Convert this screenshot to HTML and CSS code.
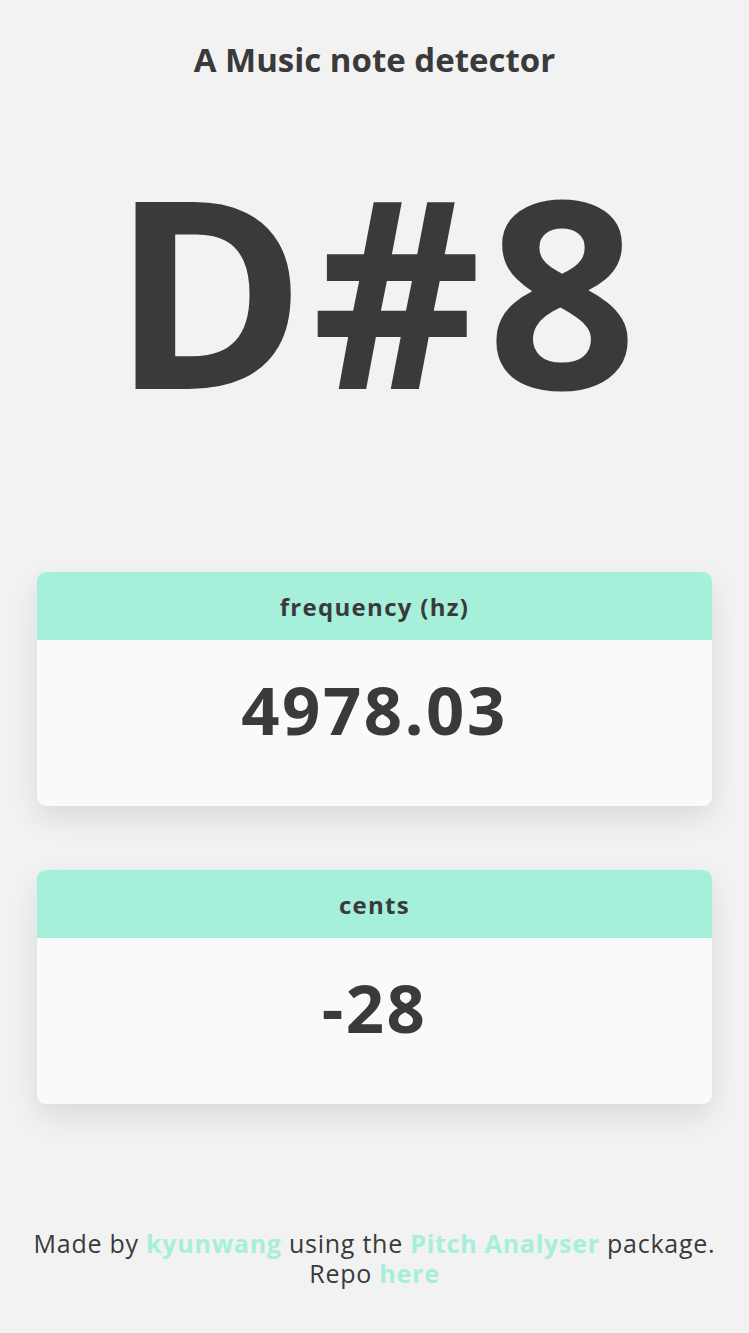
FILE: index.html
```html
<!DOCTYPE html>
<html>
<head>
<meta charset="utf-8">
<link rel="stylesheet" href="styles.css">
</head>
<body>
<main class="app">
  <h1 class="title">A Music note detector</h1>
  <div class="note">D#8</div>
  <section class="cards">
    <div class="card">
      <div class="card-head">frequency (hz)</div>
      <div class="card-body">4978.03</div>
    </div>
    <div class="card">
      <div class="card-head">cents</div>
      <div class="card-body">-28</div>
    </div>
  </section>
  <footer class="footer">
    Made by <a href="#">kyunwang</a> using the <a href="#">Pitch Analyser</a> package.<br>
    Repo <a href="#">here</a>
  </footer>
</main>
</body>
</html>
```
FILE: styles.css
```css
html, body {
  margin: 0;
  padding: 0;
  background: #f2f2f2;
}
body {
  font-family: "Open Sans", "DejaVu Sans", sans-serif;
  color: #3a3a3a;
}
.app {
  display: flex;
  flex-direction: column;
  align-items: center;
  min-height: 1333px;
}
.title {
  margin: 0;
  padding-top: 38px;
  font-size: 33px;
  font-weight: 700;
  line-height: 44px;
}
.note {
  margin-top: 75px;
  padding-left: 6px;
  font-size: 262px;
  font-weight: 700;
  line-height: 262px;
  letter-spacing: 6px;
}
.cards {
  margin-top: 153px;
  width: 90%;
  display: flex;
  flex-direction: column;
  gap: 64px;
}
.card {
  border-radius: 9px;
  overflow: hidden;
  background: #fafafa;
  box-shadow: 0 12px 30px rgba(0, 0, 0, 0.1);
}
.card-head {
  height: 68px;
  background: #a5efdb;
  display: flex;
  align-items: center;
  justify-content: center;
  font-size: 24px;
  font-weight: 700;
  letter-spacing: 1.3px;
}
.card-body {
  height: 166px;
  display: flex;
  justify-content: center;
  padding-top: 36px;
  box-sizing: border-box;
  font-size: 67px;
  font-weight: 700;
  line-height: 1;
  letter-spacing: 2.5px;
}
.footer {
  margin-top: 124px;
  text-align: center;
  font-size: 25px;
  line-height: 30px;
  letter-spacing: 0.75px;
}
.footer a {
  color: #a5efdb;
  font-weight: 700;
  text-decoration: none;
}
```
